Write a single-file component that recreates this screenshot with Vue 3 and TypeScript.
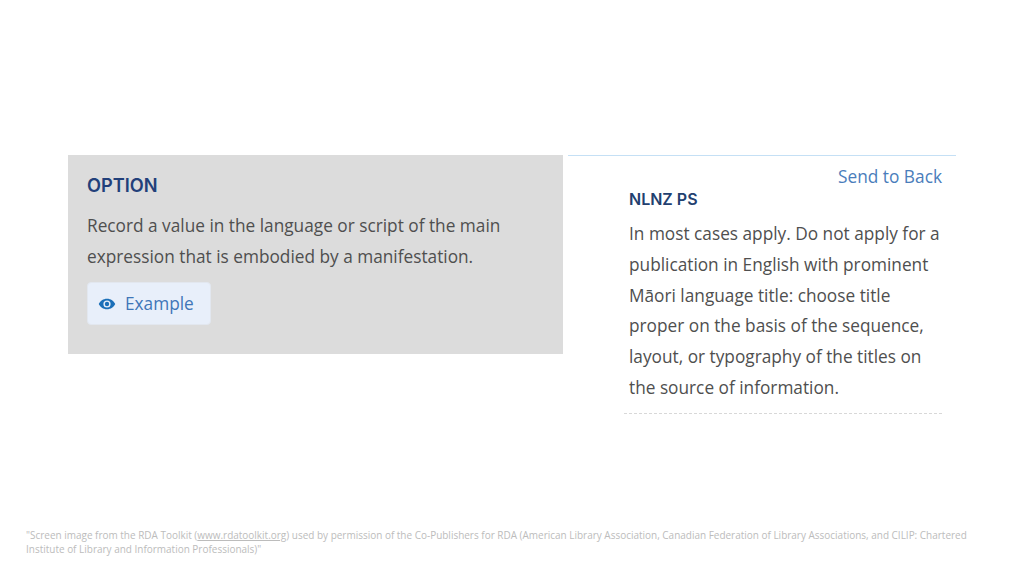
<script setup lang="ts">
const footerBefore = '"Screen image from the RDA Toolkit ('
const footerLink = 'www.rdatoolkit.org'
const footerAfter =
  ') used by permission of the Co-Publishers for RDA (American Library Association, Canadian Federation of Library Associations, and CILIP: Chartered Institute of Library and Information Professionals)"'
</script>

<template>
  <div class="slide">
    <main class="content">
      <section class="option">
        <h2 class="option-title">OPTION</h2>
        <p class="option-text">
          Record a value in the language or script of the main expression that is embodied by a manifestation.
        </p>
        <button class="example" type="button">
          <svg class="eye" viewBox="0 0 24 16" aria-hidden="true">
            <path
              fill-rule="evenodd"
              d="M12 1C7 1 2.800 3.900 1 8c1.800 4.100 6 7 11 7s9.200-2.900 11-7c-1.800-4.100-6-7-11-7zm0 2.200a4.800 4.800 0 1 1 0 9.600 4.800 4.800 0 0 1 0-9.600z"
            />
            <circle cx="12" cy="8" r="2.900" />
          </svg>
          <span>Example</span>
        </button>
      </section>

      <aside class="policy">
        <div class="policy-actions"><a class="send-back">Send to Back</a></div>
        <div class="policy-body">
          <h3 class="policy-title">NLNZ PS</h3>
          <p class="policy-text">
            In most cases apply. Do not apply for a publication in English with prominent Māori language title: choose title proper on the basis of the sequence, layout, or typography of the titles on the source of information.
          </p>
        </div>
      </aside>
    </main>

    <footer class="credit">
      {{ footerBefore }}<u>{{ footerLink }}</u>{{ footerAfter }}
    </footer>
  </div>
</template>

<style scoped>
.slide {
  width: 1024px;
  height: 576px;
  display: flex;
  flex-direction: column;
  background: #ffffff;
  font-family: "Open Sans", "Liberation Sans", sans-serif;
  overflow: hidden;
}

.content {
  display: flex;
  align-items: flex-start;
  gap: 5px;
  padding: 155px 68px 0;
  flex: 1;
}

.option {
  width: 495px;
  height: 199px;
  box-sizing: border-box;
  padding: 20px 19px 0;
  background: #dcdcdc;
}

.option-title {
  margin: 0;
  font-family: "Inter", "Liberation Sans", sans-serif;
  font-size: 18.2px;
  line-height: 20px;
  font-weight: 600;
  color: #22407a;
}

.option-text {
  margin: 15px 0 0;
  font-size: 17.25px;
  line-height: 31px;
  color: #4f4f4f;
}

.example {
  display: flex;
  align-items: center;
  gap: 9px;
  width: 124px;
  height: 43px;
  margin-top: 10px;
  padding: 0 0 0 10px;
  border: 1px solid #e2e7ef;
  border-radius: 4px;
  background: #e8effa;
  font-family: inherit;
  font-size: 17.25px;
  color: #3f76b8;
}

.eye {
  width: 18px;
  height: 12px;
  fill: #1a6fb8;
}

.policy {
  width: 388px;
  box-sizing: border-box;
  border-top: 1px solid #c5e0f5;
}

.policy-actions {
  display: flex;
  justify-content: flex-end;
  padding: 9px 14px 0 0;
  height: 23px;
}

.send-back {
  font-size: 17.3px;
  line-height: 24px;
  color: #4a7dbb;
}

.policy-body {
  margin: 0 14px 0 56px;
  padding: 0 0 9px 5px;
  border-bottom: 1px dashed #d8d8d8;
}

.policy-title {
  margin: 0;
  font-family: "Inter", "Liberation Sans", sans-serif;
  font-size: 16px;
  line-height: 22px;
  font-weight: 600;
  color: #22406f;
}

.policy-text {
  margin: 9px 0 0;
  font-size: 17.25px;
  line-height: 30.8px;
  color: #4f4f4f;
}

.credit {
  padding: 0 50px 20px 26px;
  font-size: 9.97px;
  line-height: 14px;
  color: #bcbcbc;
}
</style>
